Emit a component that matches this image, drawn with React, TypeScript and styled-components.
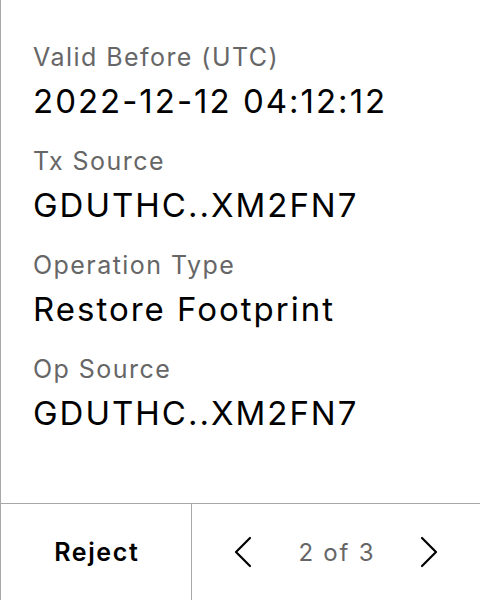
import React from "react";
import styled, { createGlobalStyle } from "styled-components";

const Global = createGlobalStyle`
  html, body { margin: 0; padding: 0; background: #fff; }
  body {
    font-family: Inter, "Noto Sans", sans-serif;
  }
`;

const Page = styled.div`
  width: 480px;
  height: 600px;
  box-sizing: border-box;
  border-left: 1px solid #a8a8a8;
  display: flex;
  flex-direction: column;
  background: #fff;
`;

const Details = styled.div`
  flex: 1;
  display: flex;
  flex-direction: column;
  gap: 24px;
  padding: 41px 0 0 32px;
`;

const Field = styled.div`
  display: flex;
  flex-direction: column;
  gap: 8px;
`;

const Label = styled.div`
  font-size: 25px;
  line-height: 32px;
  letter-spacing: 1.45px;
  color: #666;
`;

const Value = styled.div`
  font-size: 33px;
  line-height: 40px;
  letter-spacing: 2px;
  color: #000;
`;

const Footer = styled.div`
  height: 96px;
  border-top: 1px solid #a8a8a8;
  display: grid;
  grid-template-columns: 191px 1fr;
`;

const RejectButton = styled.button`
  border: none;
  border-right: 1px solid #a8a8a8;
  background: transparent;
  font-family: inherit;
  font-size: 25px;
  font-weight: 600;
  letter-spacing: 1.6px;
  text-indent: 1.6px;
  color: #000;
  padding: 0;
  cursor: pointer;
`;

const Pager = styled.div`
  display: flex;
  align-items: center;
  justify-content: center;
  gap: 45px;
`;

const Count = styled.span`
  font-size: 24px;
  letter-spacing: 1.8px;
  margin-right: -1.8px;
  color: #666;
`;

const Arrow = styled.button`
  border: none;
  background: transparent;
  padding: 0;
  width: 20px;
  height: 32px;
  display: flex;
  align-items: center;
  justify-content: center;
  cursor: pointer;
`;

const Chevron = ({ dir }: { dir: "left" | "right" }) => (
  <svg width="20" height="32" viewBox="0 0 20 32" fill="none">
    <path
      d={dir === "left" ? "M17 2 L3 16 L17 30" : "M3 2 L17 16 L3 30"}
      stroke="#000"
      strokeWidth="2.2"
      strokeLinecap="round"
      strokeLinejoin="round"
    />
  </svg>
);

const fields = [
  ["Valid Before (UTC)", "2022-12-12 04:12:12"],
  ["Tx Source", "GDUTHC..XM2FN7"],
  ["Operation Type", "Restore Footprint"],
  ["Op Source", "GDUTHC..XM2FN7"],
];

export default function App() {
  return (
    <>
      <Global />
      <Page>
        <Details>
          {fields.map(([l, v]) => (
            <Field key={l}>
              <Label>{l}</Label>
              <Value>{v}</Value>
            </Field>
          ))}
        </Details>
        <Footer>
          <RejectButton>Reject</RejectButton>
          <Pager>
            <Arrow aria-label="Previous">
              <Chevron dir="left" />
            </Arrow>
            <Count>2 of 3</Count>
            <Arrow aria-label="Next">
              <Chevron dir="right" />
            </Arrow>
          </Pager>
        </Footer>
      </Page>
    </>
  );
}
